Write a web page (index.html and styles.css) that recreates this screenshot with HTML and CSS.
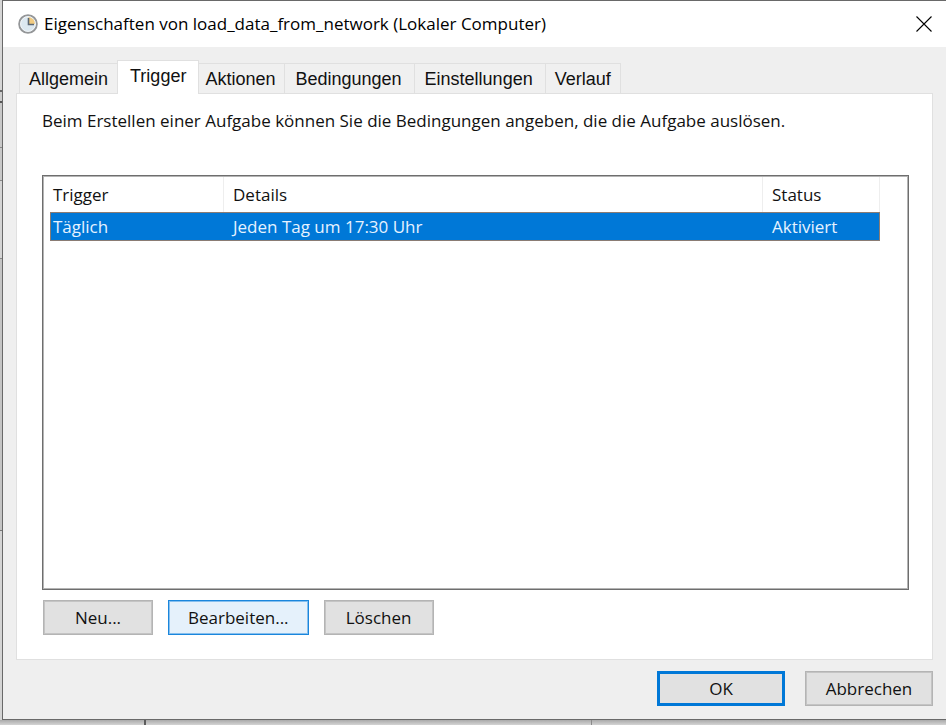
FILE: index.html
```html
<!DOCTYPE html>
<html lang="de">
<head>
<meta charset="utf-8">
<meta name="viewport" content="width=device-width, initial-scale=1">
<title>Eigenschaften von load_data_from_network (Lokaler Computer)</title>
<link rel="stylesheet" href="styles.css">
</head>
<body>
<main class="window">
  <header class="titlebar">
    <svg class="clock" viewBox="0 0 20 20" aria-hidden="true">
      <circle cx="10" cy="10" r="8.800" fill="#dce8f0" stroke="#949698" stroke-width="2"/>
      <circle cx="10" cy="10" r="7.400" fill="none" stroke="#f3f6f8" stroke-width="1"/>
      <path d="M10.500 10V3A7 7 0 0 1 17 10Z" fill="#f2cb80"/>
      <path d="M10.500 4V10.500H16" fill="none" stroke="#5d6874" stroke-width="1.600"/>
    </svg>
    <h1 class="title">Eigenschaften von load_data_from_network (Lokaler Computer)</h1>
    <button class="close" type="button" aria-label="Schließen">
      <svg class="cross" viewBox="0 0 16 16" aria-hidden="true"><path d="M.5 .5 15.500 15.500M15.500 .5 .5 15.500" stroke="#000" stroke-width="1.100"/></svg>
    </button>
  </header>
  <div class="tabs" role="tablist">
    <button class="tab" type="button" role="tab">Allgemein</button>
    <button class="tab tab-active" type="button" role="tab" aria-selected="true">Trigger</button>
    <button class="tab" type="button" role="tab">Aktionen</button>
    <button class="tab tab-long" type="button" role="tab">Bedingungen</button>
    <button class="tab tab-long" type="button" role="tab">Einstellungen</button>
    <button class="tab" type="button" role="tab">Verlauf</button>
  </div>
  <section class="panel" role="tabpanel">
    <p class="hint">Beim Erstellen einer Aufgabe können Sie die Bedingungen angeben, die die Aufgabe auslösen.</p>
    <div class="list">
      <table class="triggers">
        <thead>
          <tr><th class="col-trigger">Trigger</th><th>Details</th><th class="col-status">Status</th></tr>
        </thead>
        <tbody>
          <tr class="selected"><td>Täglich</td><td>Jeden Tag um 17:30 Uhr</td><td>Aktiviert</td></tr>
        </tbody>
      </table>
    </div>
    <div class="actions">
      <button class="button" type="button">Neu...</button>
      <button class="button button-hover" type="button">Bearbeiten...</button>
      <button class="button" type="button">Löschen</button>
    </div>
  </section>
  <footer class="footer">
    <button class="button button-wide button-default" type="button">OK</button>
    <button class="button button-wide" type="button">Abbrechen</button>
  </footer>
</main>
</body>
</html>
```

FILE: styles.css
```css
* {
  box-sizing: border-box;
}

body {
  display: flex;
  flex-direction: column;
  min-height: 100vh;
  margin: 0;
  padding: 0 0 5px 2px;
  background:
    linear-gradient(#5c5c5c, #5c5c5c) 144px 100% / 2px 5px no-repeat,
    linear-gradient(#8a8a8a, #8a8a8a) 591px 100% / 1px 5px no-repeat,
    linear-gradient(#aaa, #d4d4d4) 0 100% / 100% 5px no-repeat,
    linear-gradient(#d6d6d6 0 90px, #666 90px 92px, #ccc 92px 101px, #555 101px 103px, #c8c8c8 103px 147px, #888 147px 148px, #c8c8c8 148px 180px, #888 180px 181px, #d4d4d4 181px 258px, #888 258px 259px, #c4c4c4 259px 530px, #777 530px 531px, #d4d4d4 531px);
  color: #111;
  font: 17px/24px "Open Sans", "Noto Sans", sans-serif;
}

.window {
  display: flex;
  flex: 1;
  flex-direction: column;
  border: 1px solid #696969;
  border-right: 0;
  background: #efefef;
}

.titlebar {
  display: flex;
  align-items: center;
  height: 46px;
  padding: 0 14px 0 15px;
  background: #fff;
}

.clock {
  width: 20px;
  height: 20px;
}

.title {
  flex: 1;
  margin: 0 0 0 6px;
  color: #000;
  font-size: 17px;
  font-weight: 400;
}

.close {
  display: flex;
  padding: 0;
  border: 0;
  background: none;
}

.cross {
  width: 16px;
  height: 16px;
}

.tabs {
  display: flex;
  align-items: flex-end;
  height: 46px;
  padding-left: 16px;
}

.tab {
  height: 30px;
  padding: 0 9px;
  border: 1px solid #e0e0e0;
  border-width: 1px 1px 0 0;
  background: #f0f0f0;
  color: #111;
  font: 18px/28px "Liberation Sans", Arial, sans-serif;
}

.tab:first-child {
  border-left-width: 1px;
}

.tab-long {
  padding: 0 12px 0 10px;
}

.tab-active {
  z-index: 1;
  height: 34px;
  margin: 0 -3px -1px -1px;
  padding: 0 12px 4px;
  border-left-width: 1px;
  background: #fff;
}

.panel {
  display: flex;
  flex: 1;
  flex-direction: column;
  margin: 0 13px 0 13px;
  padding: 15px 23px 24px 25px;
  border: 1px solid #e0e0e0;
  background: #fff;
}

.hint {
  margin: 0 0 42px;
}

.list {
  flex: 1;
  border: 1px solid #6e6e6e;
  box-shadow: inset 0 0 0 1px #b4b4b4;
  padding: 1px 28px 0 7px;
}

.triggers {
  width: 100%;
  border-collapse: separate;
  border-spacing: 0;
  table-layout: fixed;
}

.col-trigger {
  width: 174px;
}

.col-status {
  width: 117px;
}

.triggers th {
  height: 35px;
  padding: 1px 9px 0;
  border-right: 1px solid #eee;
  font-weight: 400;
  text-align: left;
}

.triggers th:first-child {
  padding-left: 3px;
}

.triggers td {
  height: 29px;
  padding: 0 9px;
  border: 1px solid #8a7c74;
  border-width: 1px 0;
}

.triggers td:first-child {
  padding-left: 2px;
  border-left-width: 1px;
}

.triggers td:last-child {
  border-right-width: 1px;
}

.selected {
  background: #0078d7;
  color: #e6f2ff;
}

.actions {
  display: flex;
  gap: 15px;
  margin-top: 10px;
  padding-left: 1px;
}

.button {
  min-width: 110px;
  height: 35px;
  padding: 0 19px;
  border: 1px solid #b4b4b4;
  background: #e1e1e1;
  box-shadow: inset 0 0 0 1px #c4c4c4;
  color: #111;
  font: 17px/24px "Open Sans", "Noto Sans", sans-serif;
}

.button-hover {
  border-color: #1a86dc;
  background: #e5f1fb;
  box-shadow: inset 0 0 0 1px #86bfee;
}

.button-wide {
  min-width: 128px;
  padding: 0 10px;
}

.button-default {
  border: 3px solid #0078d7;
  box-shadow: none;
}

.footer {
  display: flex;
  justify-content: flex-end;
  gap: 20px;
  padding: 11px 13px 13px;
}
```
